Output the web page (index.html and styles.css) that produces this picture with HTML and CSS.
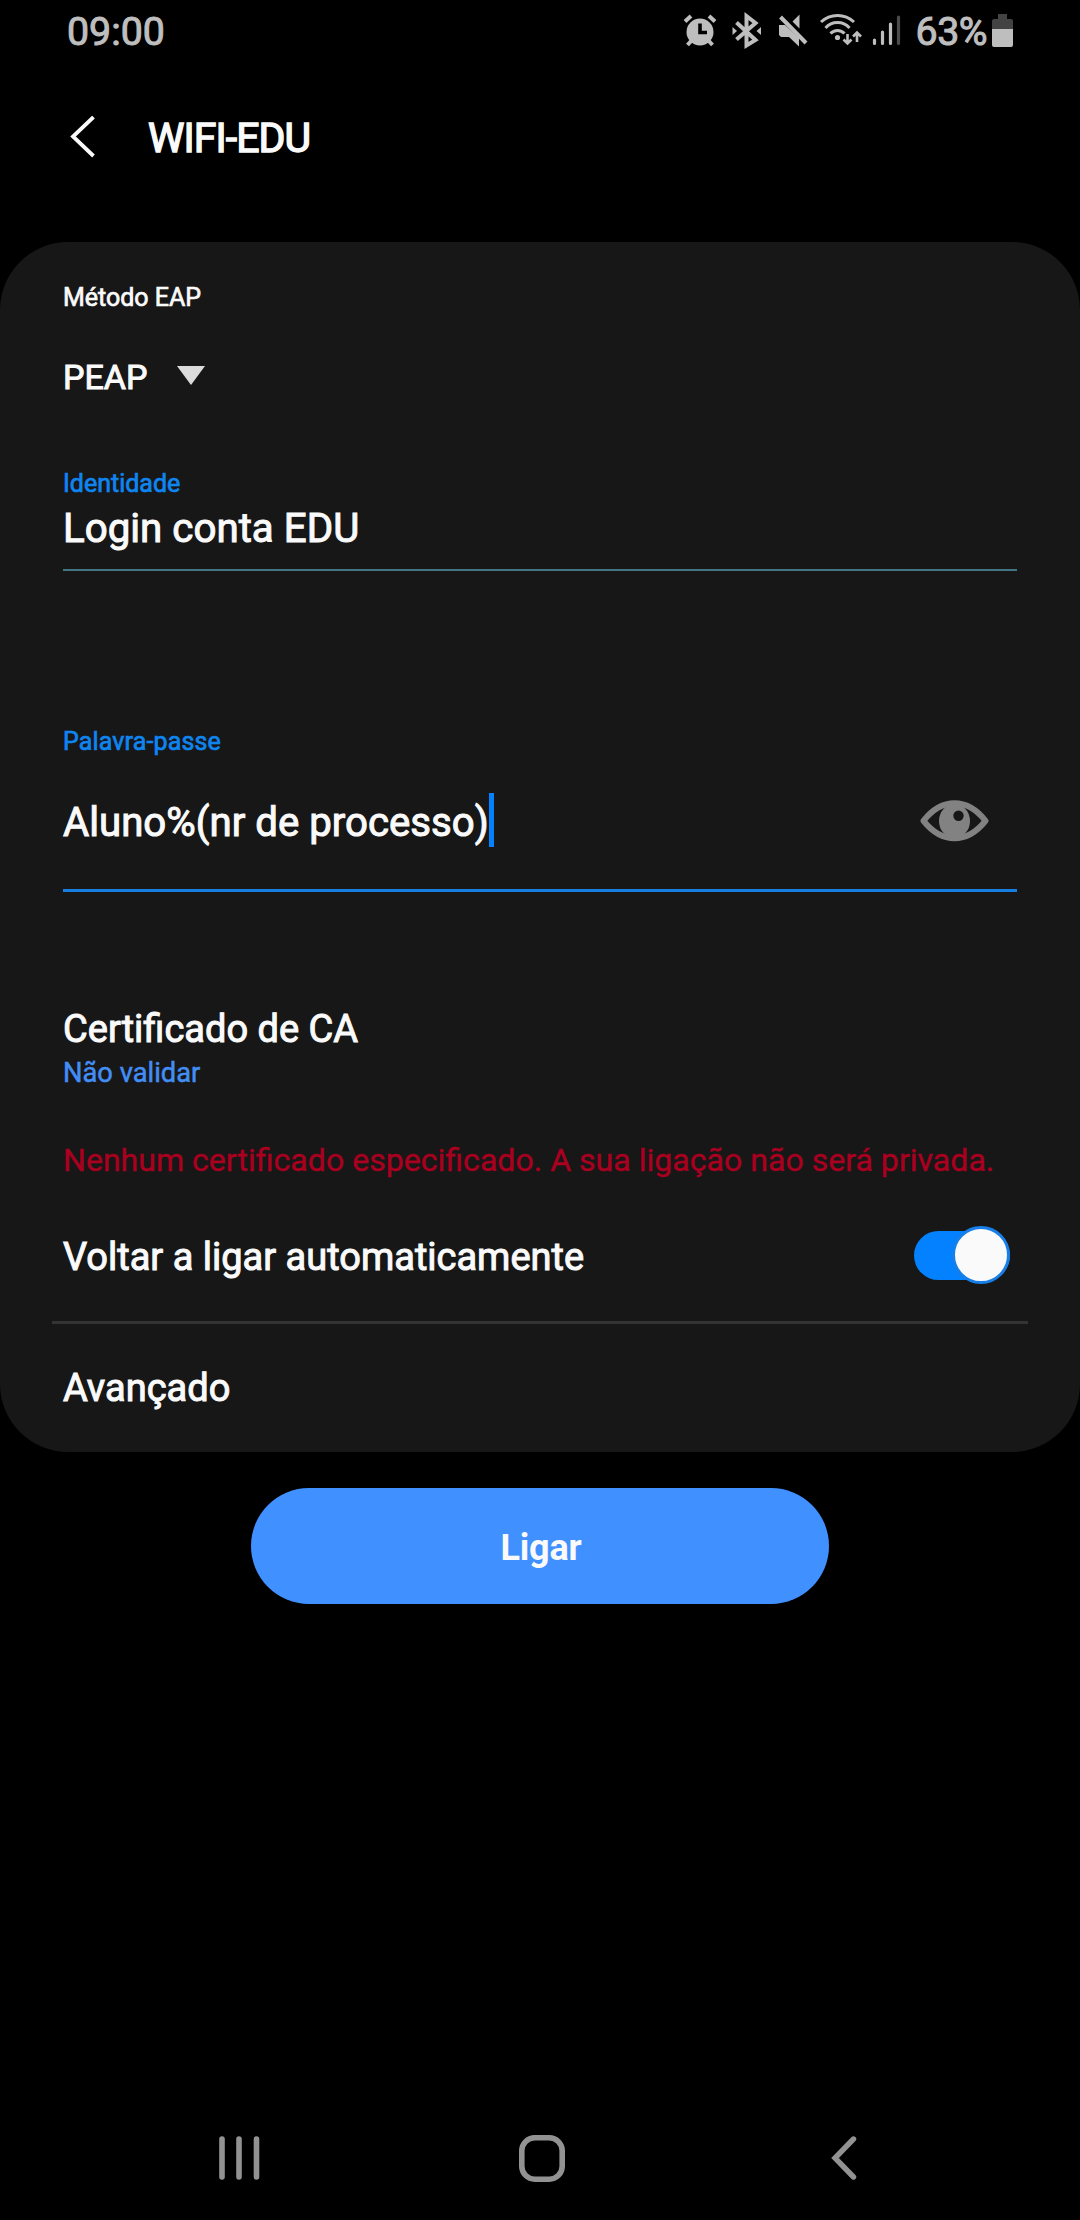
FILE: index.html
```html
<!DOCTYPE html>
<html lang="pt">
<head>
<meta charset="utf-8">
<title>WIFI-EDU</title>
<link rel="stylesheet" href="styles.css">
</head>
<body>
<div class="screen">
  <div class="status">
    <span class="clock">09:00</span>
    <div class="status-icons">
      <svg width="370" height="64" viewBox="660 0 370 64">
        <g fill="#bebebe" stroke="#bebebe" stroke-width="0">
          <circle cx="700" cy="32" r="13.5"/>
          <path d="M685 21.500l6-5.500M715 21.500l-6-5.500" stroke-width="4"/>
          <path d="M687.500 45l4.500-5M712.500 45l-4.500-5" stroke-width="4"/>
          <path d="M700 23.500v9h7" fill="none" stroke="#000" stroke-width="3.600"/>
          <path d="M736.500 22.500l19 17.500-9 5.500V16l9 7-19 16.500" fill="none" stroke-width="4"/>
          <path d="M732.500 27l4.500 4-4.500 4zM761 27l-4.500 4 4.500 4z"/>
          <path d="M779 25h6l14 13v8.500l-10-9.500h-8l-2-2zM799.500 14.500v14l-7-7z"/>
          <path d="M780.500 17l25.500 26" stroke-width="4"/>
          <path d="M821 22a24 24 0 0 1 33 0M825.500 28a16 16 0 0 1 24 0M830.500 33.500a9.500 9.500 0 0 1 14 0" fill="none" stroke-width="3"/>
          <circle cx="837.500" cy="37.500" r="2.600"/>
          <path d="M847.500 34v9M843.500 39.500l4 4 4-4M857 42v-9M853 36.500l4-4 4 4" fill="none" stroke-width="2.600"/>
          <path d="M874.500 40v3.500M882.500 32v11.500M890.500 24v19.500" stroke-width="3.200" stroke-linecap="round"/>
          <path d="M898.500 17v26.500" stroke="#4b4b4b" stroke-width="3.200" stroke-linecap="round"/>
          <path d="M998 14h9v5h4q2 0 2 2v8h-21v-8q0-2 2-2h4z" fill="#434343"/>
          <path d="M992 29h21v16q0 2-2 2h-17q-2 0-2-2z"/>
        </g>
      </svg>
      <span class="battery-text">63%</span>
    </div>
  </div>
  <header class="titlebar">
    <svg class="back" width="26" height="42" viewBox="0 0 26 42"><path d="M24.500 1L4 20.500 24.500 40" fill="none" stroke="#fafafa" stroke-width="3.800"/></svg>
    <h1 class="title">WIFI-EDU</h1>
  </header>
  <main class="card">
    <div class="label method-label">Método EAP</div>
    <div class="select"><span>PEAP</span><svg width="28" height="19" viewBox="0 0 28 19"><path d="M0 0h28L14 19z" fill="#dcdcdc"/></svg></div>
    <div class="label accent identity-label">Identidade</div>
    <div class="identity">Login conta EDU</div>
    <div class="label accent pass-label">Palavra-passe</div>
    <div class="password">
      <span>Aluno%(nr de processo)</span><i class="caret"></i>
      <svg class="eye" width="69" height="42" viewBox="0 0 69 42"><path d="M3.500 20.800C22 -2.500 47 -2.500 65.500 20.800 47 44 22 44 3.500 20.800z" fill="none" stroke="#828282" stroke-width="6" stroke-linejoin="round"/><ellipse cx="34.500" cy="21" rx="15.500" ry="17" fill="#828282"/><circle cx="38.500" cy="15.800" r="5.200" fill="#171717"/></svg>
    </div>
    <div class="row-title cert">Certificado de CA</div>
    <div class="cert-value">Não validar</div>
    <div class="warning">Nenhum certificado especificado. A sua ligação não será privada.</div>
    <div class="auto"><span class="row-title auto-title">Voltar a ligar automaticamente</span><span class="toggle"><i class="thumb"></i></span></div>
    <div class="row-title advanced">Avançado</div>
  </main>
  <button class="connect">Ligar</button>
  <nav class="nav">
    <svg width="42" height="44" viewBox="0 0 42 44"><path d="M4 3v38M21 3v38M38.500 3v38" stroke="#929292" stroke-width="5.600" stroke-linecap="round"/></svg>
    <svg class="home" width="46" height="47" viewBox="0 0 46 47"><rect x="2.800" y="2.800" width="40.400" height="41.400" rx="13" fill="none" stroke="#929292" stroke-width="5.600"/></svg>
    <svg width="26" height="44" viewBox="0 0 26 44"><path d="M22.500 3L4 22l18.500 19" fill="none" stroke="#929292" stroke-width="5.400" stroke-linecap="round"/></svg>
  </nav>
</div>
</body>
</html>
```
FILE: styles.css
```css
* { box-sizing: border-box; }
body { margin: 0; background: #000; color: #fafafa; font-family: Roboto, sans-serif; -webkit-text-stroke: 1px currentColor; }
svg { display: block; flex: none; }
.screen { width: 1080px; height: 2220px; display: flex; flex-direction: column; overflow: hidden; }
.status { height: 64px; display: flex; justify-content: space-between; padding: 0 50px 0 67px; color: #bebebe; font-size: 39.3px; line-height: 64px; }
.status-icons { display: grid; width: 370px; }
.status-icons > * { grid-area: 1 / 1; }
.battery-text { justify-self: end; margin-right: 43px; letter-spacing: -0.5px; }
.titlebar { height: 146px; display: flex; align-items: center; padding-left: 69px; gap: 53px; }
.title { margin: 1px 0 0; font-size: 41px; line-height: 50px; font-weight: 400; letter-spacing: -0.9px; -webkit-text-stroke-width: 1.4px; }
.card { margin-top: 32px; height: 1210px; background: #171717; border-radius: 68px; padding: 40px 63px 0; display: flex; flex-direction: column; flex: none; }
.label { height: 30px; font-size: 25px; line-height: 32px; -webkit-text-stroke-width: 0.7px; }
.accent { color: #0f85f0; }
.select { margin-top: 44px; font-size: 34px; line-height: 42px; display: flex; gap: 30px; }
.select svg { margin-top: 10px; }
.identity-label { margin-top: 70px; }
.identity { margin-top: 6px; height: 67px; font-size: 40.3px; line-height: 50px; border-bottom: 2px solid #447584; }
.pass-label { margin-top: 155px; letter-spacing: 0.15px; }
.password { margin-top: 37px; height: 99px; display: flex; border-bottom: 3px solid #187fe2; font-size: 40.2px; line-height: 60px; }
.caret { width: 5px; height: 54px; background: #0381fe; }
.eye { margin: 7px 28px 0 auto; }
.row-title { font-size: 38px; line-height: 48px; }
.cert { margin-top: 113px; }
.cert-value { margin-top: 5px; font-size: 27.3px; line-height: 30px; color: #438ef5; -webkit-text-stroke-width: 0.5px; }
.warning { margin-top: 52px; font-size: 32.1px; line-height: 40px; color: #aa0020; white-space: nowrap; -webkit-text-stroke-width: 0.4px; }
.auto { margin: 46px -11px 0; padding: 0 18px 37px 11px; height: 98px; display: flex; justify-content: space-between; align-items: center; border-bottom: 3px solid #333; }
.auto-title { padding-top: 3px; }
.toggle { width: 96px; height: 49px; border-radius: 25px; background: #0381fe; display: flex; justify-content: flex-end; align-items: center; }
.thumb { width: 58px; height: 58px; flex: none; border-radius: 50%; background: #fafafa; border: 3px solid #187fe8; }
.advanced { margin-top: 40px; }
.connect { flex: none; align-self: center; margin-top: 36px; width: 578px; height: 116px; border: 0; border-radius: 58px; background: #4190ff; color: #fafafa; font: 700 36px/42px Roboto, sans-serif; padding: 4px 0 0 2px; letter-spacing: -0.2px; -webkit-text-stroke-width: 0; }
.nav { margin-top: auto; height: 124px; display: flex; align-items: center; justify-content: space-between; padding: 0 223px 0 218px; }
.home { margin-right: 8px; }
```
